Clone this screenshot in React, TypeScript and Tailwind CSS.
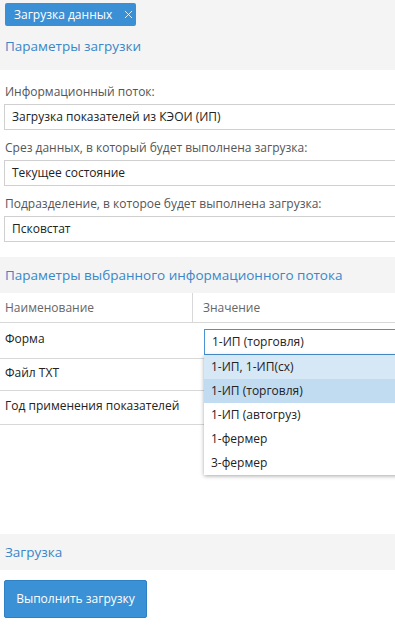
import { X } from 'lucide-react';

const options = ['1-ИП, 1-ИП(сх)', '1-ИП (торговля)', '1-ИП (автогруз)', '1-фермер', '3-фермер'];

function Field({ label, value, first }: { label: string; value: string; first?: boolean }) {
  return (
    <div className="px-[4px]">
      <div
        className={`flex items-end pb-[4px] pl-[1px] text-[12px] leading-[16px] text-[#555] ${
          first ? 'h-[34px]' : 'h-[30px]'
        }`}
      >
        {label}
      </div>
      <div className="h-[26px] -mr-[10px] border border-[#d0d0d0] bg-white pl-[7px] text-[12px] leading-[24px] text-[#222]">
        {value}
      </div>
    </div>
  );
}

function SectionHeader({ title }: { title: string }) {
  return (
    <div className="flex h-[36px] items-center bg-[#f4f4f4] px-[5px] text-[13.5px] text-[#3a86c8]">{title}</div>
  );
}

export default function App() {
  return (
    <div className="h-[627px] w-[395px] overflow-hidden bg-white font-['Open_Sans',sans-serif] leading-[16px]">
      {/* Tab bar + first header */}
      <div className="h-[70px] bg-[#f4f4f4] pt-[3px]">
        <div className="ml-[5px] flex h-[23px] w-[131px] items-center whitespace-nowrap rounded-[2px] bg-[#3b90d5] pl-[9px] text-[12px] text-white">
          <span>Загрузка данных</span>
          <X className="ml-[10px] h-[13px] w-[13px]" strokeWidth={1.5} />
        </div>
        <div className="flex h-[40px] items-center px-[5px] text-[13.5px] text-[#3a86c8]">Параметры загрузки</div>
      </div>

      {/* Load params */}
      <Field first label="Информационный поток:" value="Загрузка показателей из КЭОИ (ИП)" />
      <Field label="Срез данных, в который будет выполнена загрузка:" value="Текущее состояние" />
      <Field label="Подразделение, в которое будет выполнена загрузка:" value="Псковстат" />

      <div className="h-[15px]" />
      <SectionHeader title="Параметры выбранного информационного потока" />

      {/* Params table */}
      <div className="grid h-[30px] grid-cols-[193px_1fr] border-b border-[#d8d8d8] text-[12px] text-[#666]">
        <div className="flex items-center border-r border-[#d8d8d8] pl-[5px]">Наименование</div>
        <div className="flex items-center pl-[10px]">Значение</div>
      </div>
      <div className="grid h-[36px] grid-cols-[204px_1fr] border-b border-[#d8d8d8] text-[12px] text-[#222]">
        <div className="pl-[5px] pt-[8px]">Форма</div>
        <div className="relative pt-[6px]">
          <div className="-mr-[10px] h-[26px] border border-[#4a92d2] bg-white pl-[7px] leading-[24px]">1-ИП (торговля)</div>
          <div className="absolute left-0 top-[32px] z-10 w-[210px] bg-white shadow-[0_1px_4px_rgba(0,0,0,0.35)]">
            {options.map((o, i) => (
              <div
                key={o}
                className={`h-[24px] pl-[7px] leading-[24px] ${
                  i === 0 ? 'bg-[#d6e7f6]' : i === 1 ? 'bg-[#c1dbf0]' : 'bg-white'
                }`}
              >
                {o}
              </div>
            ))}
          </div>
        </div>
      </div>
      <div className="h-[32px] border-b border-[#d8d8d8] pl-[5px] pt-[6px] text-[12px] text-[#222]">Файл TXT</div>
      <div className="h-[34px] border-b border-[#d8d8d8] pl-[5px] pt-[7px] text-[12px] text-[#222]">
        Год применения показателей
      </div>

      <div className="h-[109px]" />
      <SectionHeader title="Загрузка" />

      <div className="px-[4px] pt-[10px]">
        <button className="h-[38px] w-[143px] rounded-[2px] border border-[#2f80c4] bg-[#3b91d5] text-[12px] text-white">
          Выполнить загрузку
        </button>
      </div>
    </div>
  );
}
